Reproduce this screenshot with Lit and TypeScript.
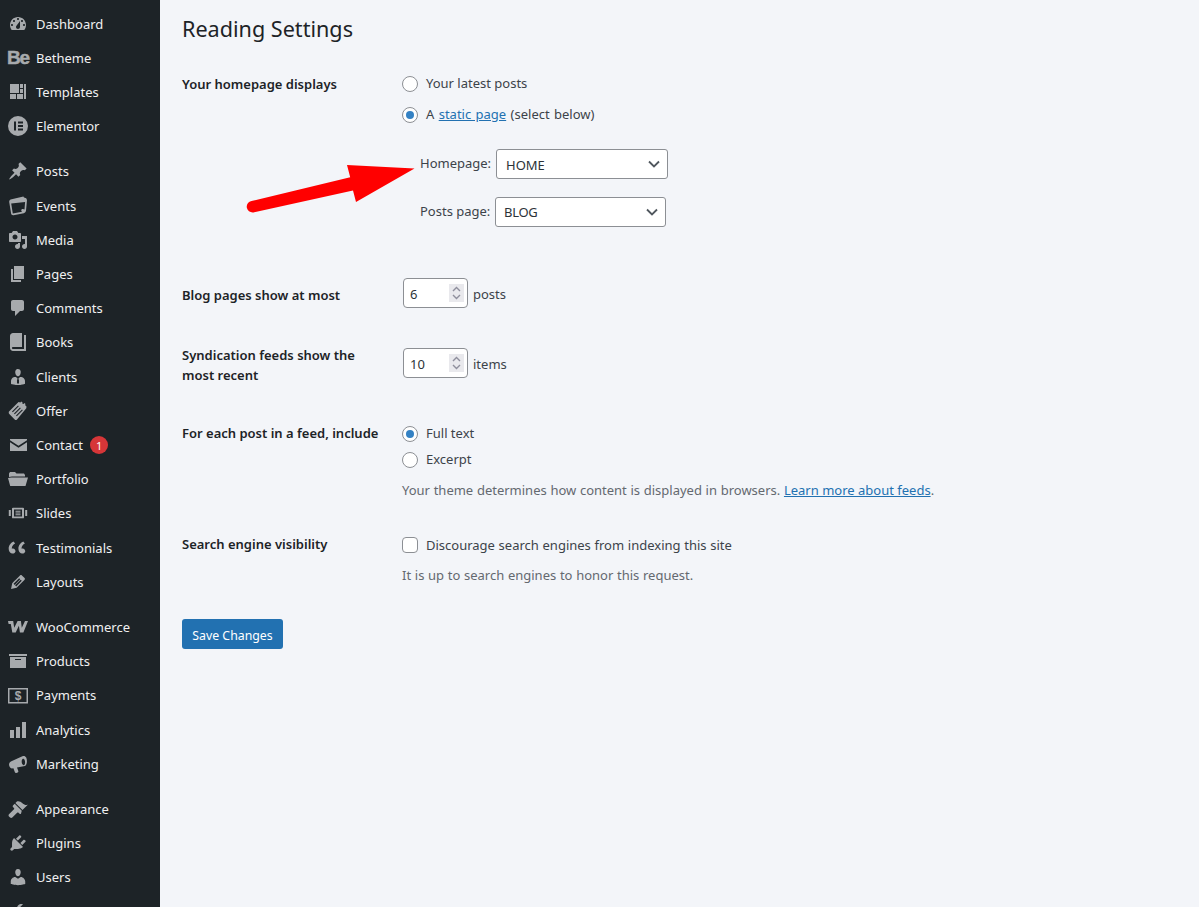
import { LitElement, html, css, svg } from "lit";
import { customElement } from "lit/decorators.js";

const P: Record<string, any> = {
  dash: svg`<path fill-rule="evenodd" d="M3.76 16h12.48c1.1-1.37 1.76-3.11 1.76-5 0-4.42-3.58-8-8-8s-8 3.58-8 8c0 1.89.66 3.63 1.76 5zM10 4c.55 0 1 .45 1 1s-.45 1-1 1-1-.45-1-1 .45-1 1-1zM6 6c.55 0 1 .45 1 1s-.45 1-1 1-1-.45-1-1 .45-1 1-1zm8 0c.55 0 1 .45 1 1s-.45 1-1 1-1-.45-1-1 .45-1 1-1zm-5.37 5.55L12 7v6c0 1.1-.9 2-2 2s-2-.9-2-2c0-.57.24-1.08.63-1.45zM4 10c.55 0 1 .45 1 1s-.45 1-1 1-1-.45-1-1 .45-1 1-1zm12 0c.55 0 1 .45 1 1s-.45 1-1 1-1-.45-1-1 .45-1 1-1z"/>`,
  templates: svg`<path d="M2 2h9v9H2zM12 2h3v4h-3zM12 7h3v4h-3zM2 12h6v5H2zM9 12h6v5H9zM16 2h2v15h-2z"/>`,
  elementor: svg`<path fill-rule="evenodd" d="M10 0a10 10 0 1 0 0 20 10 10 0 0 0 0-20zM6 5.5h2v9H6zM10 5.5h5v1.9h-5zM10 9h5v1.9h-5zM10 12.6h5v1.9h-5z"/>`,
  post: svg`<path d="M10.44 3.02l1.82-1.82 6.36 6.35-1.83 1.82c-1.05-.68-2.48-.57-3.41.36l-.75.75c-.92.93-1.04 2.35-.35 3.41l-1.83 1.82-2.41-2.41-2.8 2.79c-.42.42-3.38 2.71-3.8 2.29s1.86-3.39 2.28-3.81l2.79-2.79L4.1 9.36l1.83-1.82c1.05.69 2.48.57 3.4-.36l.75-.75c.93-.92 1.05-2.35.36-3.41z"/>`,
  events: svg`<path fill-rule="evenodd" d="M2.6 3.5l12.8-3 .6 1 2.2.8.8 1.7-.4 4.5-.6 6.3c-.2 1.2-1 2.1-2.2 2.5l-10.3 2c-1.3.2-2.2-.5-2.4-1.7L1.2 6c-.1-1 .4-2 1.4-2.5zM3.2 7.6l1.6 9.9 9.3-1.8c-.8-.5-1.1-1.4-.6-2.3.9-.7 2.2-.6 3 .2l.6-7.5z"/>`,
  media: svg`<path fill-rule="evenodd" d="M13 11V4c0-.55-.45-1-1-1h-1.67L9 1H5L3.67 3H2c-.55 0-1 .45-1 1v7c0 .55.45 1 1 1h10c.55 0 1-.45 1-1zM7 4.5c1.38 0 2.5 1.12 2.5 2.5S8.38 9.5 7 9.5 4.5 8.38 4.5 7 5.62 4.5 7 4.5zM14 6h5v10.5c0 1.38-1.12 2.5-2.5 2.5S14 17.88 14 16.5s1.12-2.5 2.5-2.5c.17 0 .34.02.5.05V9h-3V6zm-4 8.05V13h2v3.5c0 1.38-1.12 2.5-2.5 2.5S7 17.88 7 16.5 8.12 14 9.5 14c.17 0 .34.02.5.05z"/>`,
  page: svg`<path d="M6 15V2h10v13H6zm-1 1h8v2H3V5h2v11z"/>`,
  comments: svg`<path d="M5 2h9c1.1 0 2 .9 2 2v7c0 1.1-.9 2-2 2h-2l-5 5v-5H5c-1.1 0-2-.9-2-2V4c0-1.1.9-2 2-2z"/>`,
  book: svg`<path d="M16 3h2v16H5c-1.66 0-3-1.34-3-3V4c0-1.66 1.34-3 3-3h9v14H5c-.55 0-1 .45-1 1s.45 1 1 1h11V3z"/>`,
  clients: svg`<path d="M7.3 6l-.03-.19c-.04-.37-.05-.73-.03-1.08.02-.36.1-.71.25-1.04.14-.32.31-.61.52-.86s.49-.46.83-.6c.34-.15.72-.23 1.13-.23.69 0 1.26.2 1.71.59s.76.87.91 1.44.18 1.16.09 1.78l-.03.19c-.01.09-.05.25-.11.48-.05.24-.12.47-.2.69-.08.21-.19.45-.34.72-.14.27-.3.49-.47.69-.18.19-.4.34-.67.48-.27.13-.55.19-.86.19s-.59-.06-.87-.19c-.26-.13-.49-.29-.67-.5-.18-.2-.34-.42-.49-.66-.15-.25-.26-.49-.34-.73-.09-.25-.16-.47-.21-.67-.06-.21-.1-.37-.12-.5zm9.2 6.24c.41.7.5 1.41.5 2.14v2.49c0 .03-.12.08-.29.13-.18.04-.42.13-.97.27-.55.12-1.1.24-1.65.34s-1.19.19-1.95.27c-.75.08-1.46.12-2.13.12-.68 0-1.39-.04-2.14-.12-.75-.07-1.4-.17-1.98-.27-.58-.11-1.08-.23-1.56-.34-.49-.11-.8-.21-1.06-.29L3 16.87v-2.49c0-.75.07-1.46.46-2.15s.81-1.25 1.5-1.68C5.66 10.12 7.19 10 8 10l1.67 1.67L9 13v3l1.02 1.08L11 16v-3l-.68-1.33L11.97 10c.77 0 2.2.07 2.9.52.71.45 1.21 1.02 1.63 1.72z"/>`,
  offer: svg`<path fill-rule="evenodd" d="M1 10.5L10.5 1l2 .6.6-1 1.5.9-.4 1 1.5.6.5-1 1.4 1-.6 1 1.5 1.5-.2 1.7L9 18.5c-.7.7-1.6.7-2.3 0L1.3 13c-.6-.7-.7-1.8-.3-2.5zM4 10.5l.8.8 6-6-.8-.8zM6 12.5l.8.8 6-6-.8-.8zM8 14.5l.8.8 6-6-.8-.8z"/>`,
  mail: svg`<path fill-rule="evenodd" d="M2 4h17v1.2l-8.5 5.6L2 5.2zM2 7.2l8.5 5.6L19 7.2V16H2z"/>`,
  folder: svg`<path d="M1 8V4.5L2 3h5l1.5 1.5H16L17 6v1.5H4zM0 9l3.3-.5H20l-2.5 8.5H2.2z"/>`,
  slides: svg`<path fill-rule="evenodd" d="M5 4h10c.6 0 1 .4 1 1v10c0 .6-.4 1-1 1H5c-.6 0-1-.4-1-1V5c0-.6.4-1 1-1zm1 2v8h8V6zM7.5 7.5h5v1h-5zM7.5 9.5h5v1h-5zM7.5 11.5h5v1h-5zM.8 6.5h2v7h-2zM17.2 6.5h2v7h-2z" transform="translate(0 1.2) scale(1 .88)"/>`,
  quote: svg`<path d="M8.54 12.74c0-.87-.24-1.61-.72-2.22-.73-.92-2.14-1.03-2.96-.85-.34-1.96 1.3-4.12 3.29-5.09L6.54 2.5C3.79 3.78.9 6.99 1.89 11.27c.42 1.78 1.69 3.05 3.43 3.3 1.24.2 3.22-.66 3.22-2.83zm9.73 0c0-.87-.24-1.61-.72-2.22-.73-.92-2.14-1.03-2.96-.85-.34-1.96 1.3-4.12 3.29-5.09L16.27 2.5c-2.75 1.28-5.64 4.49-4.65 8.77.42 1.78 1.69 3.05 3.43 3.3 1.24.2 3.22-.66 3.22-2.83z" transform="translate(-1 1)"/>`,
  edit: svg`<path fill-rule="evenodd" d="M13.89 3.39l2.71 2.72c.46.46.42 1.24.03 1.64l-8.01 8.02-5.56 1.16 1.16-5.58s7.6-7.63 7.99-8.03c.39-.39 1.22-.39 1.68.07zm-2.73 2.79l-5.59 5.61 1.11 1.11 5.54-5.65zm-2.97 8.23l5.58-5.6-1.07-1.08-5.59 5.6z"/>`,
  woo: svg`<path d="M0 4h5.2l1 6.8L9.6 4h3.3l.9 6.8L17 4h3l-4.6 11.5h-3.5l-1-6.7-3.2 6.7H4.3L2.8 7H.6z"/>`,
  archive: svg`<path fill-rule="evenodd" d="M19 3v2H1V3h18zM2 6h16v11H2V6zm11 3V8H7v1h6z"/>`,
  pay: svg`<path fill-rule="evenodd" d="M0 3h20v15.5H0zM1.5 4.5v12.5h17V4.5z"/>`,
  chart: svg`<path d="M18 18V2h-4v16h4zm-6 0V7H8v11h4zm-6 0v-8H2v8h4z"/>`,
  mega: svg`<path fill-rule="evenodd" d="M18.2 3.6c1.4 3.3.7 7.5-1.3 8.4L9 13.6l1.3 3.4c.2.6 0 1.2-.6 1.4l-1.4.5c-.6.2-1.2-.1-1.4-.7L5.4 14.3l-1.6.3C2.2 14.3 1 12 1 10.2c.2-1.4 1.2-2.5 2.4-3l11-5c1.6-.6 3-.2 3.8 1.4zM14.6 5c-1 .6-1.2 3-.5 4.8.6 1.3 1.6 1.7 2.2 1.1.9-.9 1-3.1.4-4.6-.5-1.3-1.4-1.8-2.1-1.3z"/>`,
  brush: svg`<path d="M14.48 11.06L7.41 3.99l1.5-1.5c.5-.56 2.3-.47 3.51.32 1.21.8 1.43 1.28 2.91 2.1 1.18.64 2.45 1.26 4.45.85zM13.77 11.77L6.7 4.7 4.93 6.47c-.39.39-.39 1.02 0 1.41l1.06 1.06c.39.39.39 1.03 0 1.42L1 15.2c-.6.6-.6 1.6 0 2.2l1.1 1.1c.6.6 1.6.6 2.2 0l4.8-4.8c.39-.39 1.03-.39 1.42 0l1.06 1.06c.39.39 1.02.39 1.41 0z"/>`,
  plug: svg`<path d="M13.11 4.36L9.87 7.6 8 5.73l3.24-3.24c.35-.34 1.05-.2 1.56.32.52.51.66 1.21.31 1.55zm-8 1.77l.91-1.12 9.01 9.01-1.19.84c-.71.71-2.63 1.16-3.82 1.16H6.14L4.9 17.26c-.59.59-1.54.59-2.12 0-.59-.58-.59-1.53 0-2.12l1.24-1.24v-3.88c0-1.13.4-3.19 1.09-3.89zm7.26 3.97l3.24-3.24c.34-.35 1.04-.21 1.55.31.52.51.66 1.21.31 1.55l-3.24 3.25z"/>`,
  user: svg`<path d="M10 9.25c-2.27 0-2.73-3.44-2.73-3.44C7 4.02 7.82 2 9.97 2c2.16 0 2.98 2.02 2.71 3.81 0 0-.41 3.44-2.68 3.44zm0 2.57L12.72 10c2.39 0 4.52 2.33 4.52 4.53v2.49s-3.65 1.13-7.24 1.13c-3.65 0-7.24-1.13-7.24-1.13v-2.49c0-2.25 1.94-4.48 4.47-4.48z"/>`,
  tools: svg`<path fill-rule="evenodd" d="M16.68 9.77c-1.34 1.34-3.3 1.67-4.95.99l-5.41 6.52c-.99.99-2.59.99-3.58 0s-.99-2.59 0-3.57l6.52-5.42c-.68-1.65-.35-3.61.99-4.95 1.28-1.28 3.12-1.62 4.72-1.06l-2.89 2.89 2.82 2.82 2.86-2.87c.53 1.58.18 3.39-1.08 4.65z"/>`,
};

const MENU: [string, string][][] = [
  [["Dashboard", "dash"], ["Betheme", "be"], ["Templates", "templates"], ["Elementor", "elementor"]],
  [["Posts", "post"], ["Events", "events"], ["Media", "media"], ["Pages", "page"], ["Comments", "comments"], ["Books", "book"], ["Clients", "clients"], ["Offer", "offer"], ["Contact", "mail"], ["Portfolio", "folder"], ["Slides", "slides"], ["Testimonials", "quote"], ["Layouts", "edit"]],
  [["WooCommerce", "woo"], ["Products", "archive"], ["Payments", "pay"], ["Analytics", "chart"], ["Marketing", "mega"]],
  [["Appearance", "brush"], ["Plugins", "plug"], ["Users", "user"], ["", "tools"]],
];

@customElement("app-root")
export class AppRoot extends LitElement {
  static styles = css`
    :host { display: block; height: 907px; overflow: hidden; position: relative; background: #f3f5f9; font-family: "Noto Sans", sans-serif; font-size: 13px; color: #3c434a; }
    * { box-sizing: border-box; }
    .shell { display: flex; height: 907px; }
    .side { width: 160px; flex: none; background: #1d2327; color: #f0f0f1; padding-top: 6.5px; overflow: hidden; }
    .group { margin-bottom: 11px; }
    .item { height: 34.21px; display: flex; align-items: center; padding-left: 8px; white-space: nowrap; }
    .ic { width: 20px; height: 20px; flex: none; margin-right: 8px; display: flex; align-items: center; justify-content: center; }
    .ic svg { width: 20px; height: 20px; fill: #a7aaad; display: block; }
    .be { font: 900 19px/20px "Liberation Sans", sans-serif; color: #a7aaad; letter-spacing: -1.2px; -webkit-text-stroke: .5px #a7aaad; }
    .paytxt { font: 700 12px "Liberation Sans", sans-serif; fill: #a7aaad; }
    .badge { margin-left: 7px; width: 18px; height: 18px; border-radius: 50%; background: #d63638; color: #fff; font-size: 11px; display: flex; align-items: center; justify-content: center; }
    .main { flex: 1; padding-left: 22px; min-width: 0; }
    h1 { font-size: 21.6px; font-weight: 400; color: #1d2327; margin: 0; line-height: 30px; padding-top: 14px; height: 67px; }
    .row { display: grid; grid-template-columns: 220px 1fr; align-items: start; }
    .th { font-weight: 600; color: #1d2327; line-height: 20px; max-width: 200px; }
    .radio { width: 16px; height: 16px; border-radius: 50%; border: 1px solid #8c8f94; background: #fff; flex: none; display: flex; align-items: center; justify-content: center; }
    .radio.on::after { content: ""; width: 8px; height: 8px; border-radius: 50%; background: #3582c4; }
    .check { width: 16px; height: 16px; border-radius: 4px; border: 1px solid #8c8f94; background: #fff; flex: none; }
    .opt { display: flex; align-items: center; gap: 8px; }
    .up { margin-bottom: 2px; }
    .ws { word-spacing: .3px; }
    .ws2 { word-spacing: 1px; }
    a { color: #2271b1; text-decoration: underline; }
    .pick { display: flex; align-items: center; padding-left: 18px; }
    .pick .lbl { width: 76px; margin-bottom: 2px; }
    .pick .lbl.b { width: 75px; }
    .select { width: 172px; height: 30px; border: 1px solid #8c8f94; border-radius: 3px; background: #fff; font-size: 13px; color: #2c3338; display: flex; align-items: center; justify-content: space-between; padding: 0 6px 0 9px; }
    .select.b { width: 171px; padding-left: 8px; letter-spacing: -.3px; }
    .select svg { width: 14px; height: 14px; fill: none; stroke: #50575e; stroke-width: 1.8; }
    .numline { display: flex; align-items: center; gap: 5px; padding-left: 1px; }
    .down { padding-top: 2px; }
    .num { width: 65px; height: 30px; border: 1px solid #8c8f94; border-radius: 4px; background: #fff; font-size: 13px; color: #2c3338; display: flex; align-items: center; justify-content: space-between; padding: 0 3px 0 6px; }
    .spin { width: 15px; height: 18px; background: #e9e9ed; display: block; }
    .spin svg { display: block; width: 15px; height: 18px; fill: none; stroke: #8f8f9d; stroke-width: 1.4; }
    .desc { color: #646970; }
    .btn { display: flex; align-items: center; justify-content: center; width: 101px; height: 30px; padding-top: 2px; background: #2271b1; color: #fff; border-radius: 3px; font-size: 12.3px; }
    .arrow { position: absolute; left: 240px; top: 155px; width: 180px; height: 65px; }
    .arrow path { fill: #ff0000; }

    .r1 { height: 211px; }
    .r1 .th { padding-top: 7px; }
    .o1 { height: 20px; margin-top: 7px; }
    .o2 { height: 20px; margin-top: 11px; }
    .p1 { margin-top: 24px; }
    .p2 { margin-top: 18px; }
    .r2 { height: 70px; }
    .r2 .th { padding-top: 7px; }
    .r3 { height: 70px; }
    .r3 .th { margin-top: -3px; }
    .r4 { height: 116px; }
    .r4 .th { padding-top: 5px; }
    .o3 { height: 20px; margin-top: 6px; }
    .o4 { height: 20px; margin-top: 6px; }
    .d4 { margin-top: 10px; line-height: 20px; }
    .r5 { height: 85px; }
    .r5 .cell { padding-top: 2px; }
    .d5 { margin-top: 11px; line-height: 20px; }
  `;

  icon(n: string) {
    if (n === "be") return html`<span class="ic"><span class="be">Be</span></span>`;
    if (n === "pay") return html`<span class="ic"><svg viewBox="0 0 20 20">${P.pay}<text class="paytxt" x="10" y="15" text-anchor="middle">$</text></svg></span>`;
    return html`<span class="ic"><svg viewBox="0 0 20 20">${P[n]}</svg></span>`;
  }

  render() {
    const chev = html`<svg viewBox="0 0 14 14"><path d="M2 4.5l5 5 5-5"/></svg>`;
    const spin = html`<span class="spin"><svg viewBox="0 0 15 18"><path d="M4 7l3.5-3.5L11 7M4 11l3.5 3.5L11 11"/></svg></span>`;
    return html`
      <div class="shell">
        <nav class="side">
          ${MENU.map((g) => html`<div class="group">
            ${g.map(([t, i]) => html`<div class="item">${this.icon(i)}${t ? html`<span>${t}</span>` : ""}${t === "Contact" ? html`<span class="badge">1</span>` : ""}</div>`)}
          </div>`)}
        </nav>
        <main class="main">
          <h1>Reading Settings</h1>
          <div class="row r1">
            <div class="th">Your homepage displays</div>
            <div>
              <div class="opt o1"><span class="radio"></span><span class="up">Your latest posts</span></div>
              <div class="opt o2"><span class="radio on"></span><span class="up ws2">A <a>static page</a> (select below)</span></div>
              <div class="pick p1"><span class="lbl">Homepage:</span><span class="select"><span class="down">HOME</span>${chev}</span></div>
              <div class="pick p2"><span class="lbl b">Posts page:</span><span class="select b"><span>BLOG</span>${chev}</span></div>
            </div>
          </div>
          <div class="row r2">
            <div class="th">Blog pages show at most</div>
            <div class="numline"><span class="num"><span class="down">6</span>${spin}</span><span class="down">posts</span></div>
          </div>
          <div class="row r3">
            <div class="th">Syndication feeds show the most recent</div>
            <div class="numline"><span class="num"><span class="down">10</span>${spin}</span><span class="down">items</span></div>
          </div>
          <div class="row r4">
            <div class="th">For each post in a feed, include</div>
            <div>
              <div class="opt o3"><span class="radio on"></span><span class="up">Full text</span></div>
              <div class="opt o4"><span class="radio"></span><span class="up">Excerpt</span></div>
              <div class="desc d4"><span class="ws">Your theme determines how content is displayed in browsers. </span><a>Learn more about feeds</a>.</div>
            </div>
          </div>
          <div class="row r5">
            <div class="th">Search engine visibility</div>
            <div class="cell">
              <div class="opt"><span class="check"></span><span class="ws">Discourage search engines from indexing this site</span></div>
              <div class="desc d5 ws">It is up to search engines to honor this request.</div>
            </div>
          </div>
          <div class="btn">Save Changes</div>
        </main>
      </div>
      <svg class="arrow" viewBox="240 155 180 65"><path d="M414.5 168.5L347 165l3.2 12.3-98.7 23.7c-3.4.9-5.4 3.6-4.6 7 .8 3.3 4 5 7.4 4.2L353 190.5l3 11.5z"/></svg>
    `;
  }
}
